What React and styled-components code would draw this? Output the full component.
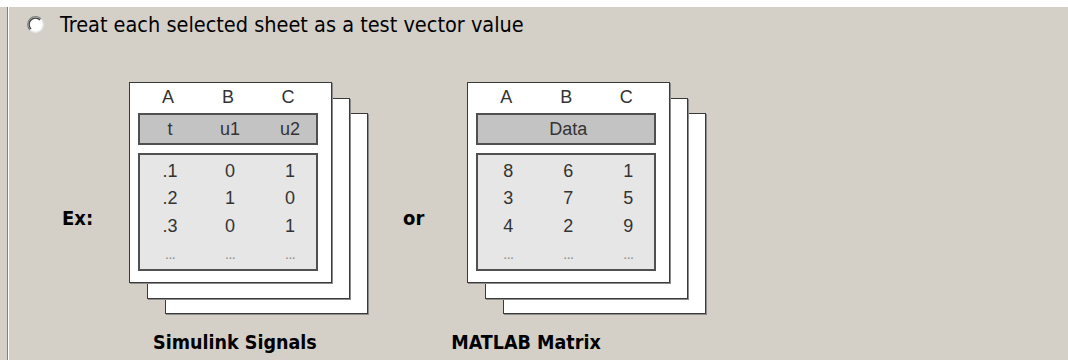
import React from "react";
import styled, { createGlobalStyle } from "styled-components";

const GlobalStyle = createGlobalStyle`
  html, body {
    margin: 0;
    padding: 0;
    background: #d4d0c8;
  }
`;

const Page = styled.div`
  width: 1068px;
  height: 360px;
  overflow: hidden;
  background: #d4d0c8;
  display: flex;
  flex-direction: column;
`;

const TopStrip = styled.div`
  height: 7px;
  background: #ffffff;
  flex-shrink: 0;
`;

const Panel = styled.div`
  flex: 1;
  margin-left: 7px;
  border-left: 1px solid #808080;
  box-shadow: inset 1px 0 0 #ffffff;
  padding-left: 1px;
  display: flex;
  flex-direction: column;
`;

const RadioRow = styled.label`
  display: flex;
  align-items: center;
  height: 24px;
  margin-top: 5px;
  padding-left: 18px;
  font-family: "DejaVu Sans Condensed", "DejaVu Sans", sans-serif;
  font-size: 21.5px;
  color: #000;
  white-space: nowrap;
`;

const RadioDot = styled.svg`
  width: 17px;
  height: 17px;
  margin-right: 16px;
  flex-shrink: 0;
`;

const ExampleRow = styled.div`
  display: flex;
  align-items: flex-start;
  margin-top: 46px;
`;

const SideLabel = styled.div`
  font-family: "DejaVu Sans Condensed", "DejaVu Sans", sans-serif;
  font-weight: bold;
  font-size: 20px;
  line-height: 22px;
  color: #000;
  margin-top: ${(p) => p.top}px;
  margin-left: ${(p) => p.left}px;
`;

const Figure = styled.div`
  display: flex;
  flex-direction: column;
  margin-left: ${(p) => p.left}px;
`;

const Stack = styled.div`
  position: relative;
  padding: 0 36px 31px 0;
`;

const Sheet = styled.div`
  width: 203px;
  height: 201px;
  box-sizing: border-box;
  background: #ffffff;
  border: 1px solid #3a3a3a;
  box-shadow: 1px 1px 0 #8c8c8c;
`;

const BackSheet = styled(Sheet)`
  position: absolute;
  left: ${(p) => p.offset * 18}px;
  top: ${(p) => p.offset * 15.5}px;
`;

const FrontSheet = styled(Sheet)`
  position: relative;
  z-index: 2;
  padding: 3px 0 0 8px;
  font-family: "Liberation Sans", Arial, sans-serif;
  font-size: 18px;
  color: #333;
`;

const Cols = styled.div`
  display: grid;
  grid-template-columns: repeat(3, 60px);
  width: 180px;
  text-align: center;
  line-height: ${(p) => p.lh || 22}px;
`;

const Letters = styled(Cols)`
  margin-bottom: 5px;
`;

const HeaderBar = styled(Cols)`
  box-sizing: border-box;
  height: 32px;
  line-height: 28px;
  background: #c3c3c3;
  border: 2px solid #505050;
  margin-bottom: 8px;
`;

const HeaderSpan = styled.div`
  grid-column: 1 / 4;
`;

const DataBox = styled(Cols)`
  box-sizing: border-box;
  height: 118px;
  padding-top: 4px;
  background: #e6e6e6;
  border: 2px solid #505050;
`;

const Dots = styled.span`
  color: #8a8a8a;
  font-size: 14px;
  letter-spacing: -0.5px;
`;

const Caption = styled.div`
  font-family: "DejaVu Sans Condensed", "DejaVu Sans", sans-serif;
  font-weight: bold;
  font-size: 19.5px;
  line-height: 22px;
  color: #000;
  margin-top: 18px;
  margin-left: ${(p) => p.shift}px;
  white-space: nowrap;
`;

function SheetStack({ header, rows }) {
  return (
    <Stack>
      <BackSheet offset={2} />
      <BackSheet offset={1} />
      <FrontSheet>
        <Letters>
          <div>A</div>
          <div>B</div>
          <div>C</div>
        </Letters>
        <HeaderBar>
          {header.length === 1 ? (
            <HeaderSpan>{header[0]}</HeaderSpan>
          ) : (
            header.map((h) => <div key={h}>{h}</div>)
          )}
        </HeaderBar>
        <DataBox lh={24.5}>
          {rows.flat().map((v, i) => (
            <div key={i}>{v}</div>
          ))}
          {[0, 1, 2].map((i) => (
            <div key={"d" + i}>
              <Dots>...</Dots>
            </div>
          ))}
        </DataBox>
      </FrontSheet>
    </Stack>
  );
}

export default function App() {
  return (
    <Page>
      <GlobalStyle />
      <TopStrip />
      <Panel>
        <RadioRow>
          <RadioDot viewBox="0 0 17 17">
            <circle cx="8.5" cy="8.5" r="7.5" fill="#ffffff" />
            <path d="M3 14 A7.5 7.5 0 0 1 14 3" fill="none" stroke="#808080" strokeWidth="1.3" />
            <path d="M4 13 A6 6 0 0 1 13 4" fill="none" stroke="#404040" strokeWidth="1.3" />
            <path d="M14 3 A7.5 7.5 0 0 1 3 14" fill="none" stroke="#e8e8e8" strokeWidth="1.3" />
          </RadioDot>
          Treat each selected sheet as a test vector value
        </RadioRow>
        <ExampleRow>
          <SideLabel left={53} top={125}>Ex:</SideLabel>
          <Figure left={36}>
            <SheetStack
              header={["t", "u1", "u2"]}
              rows={[
                [".1", "0", "1"],
                [".2", "1", "0"],
                [".3", "0", "1"],
              ]}
            />
            <Caption shift={24}>Simulink Signals</Caption>
          </Figure>
          <SideLabel left={35} top={125}>or</SideLabel>
          <Figure left={43}>
            <SheetStack
              header={["Data"]}
              rows={[
                ["8", "6", "1"],
                ["3", "7", "5"],
                ["4", "2", "9"],
              ]}
            />
            <Caption shift={-16}>MATLAB Matrix</Caption>
          </Figure>
        </ExampleRow>
      </Panel>
    </Page>
  );
}
